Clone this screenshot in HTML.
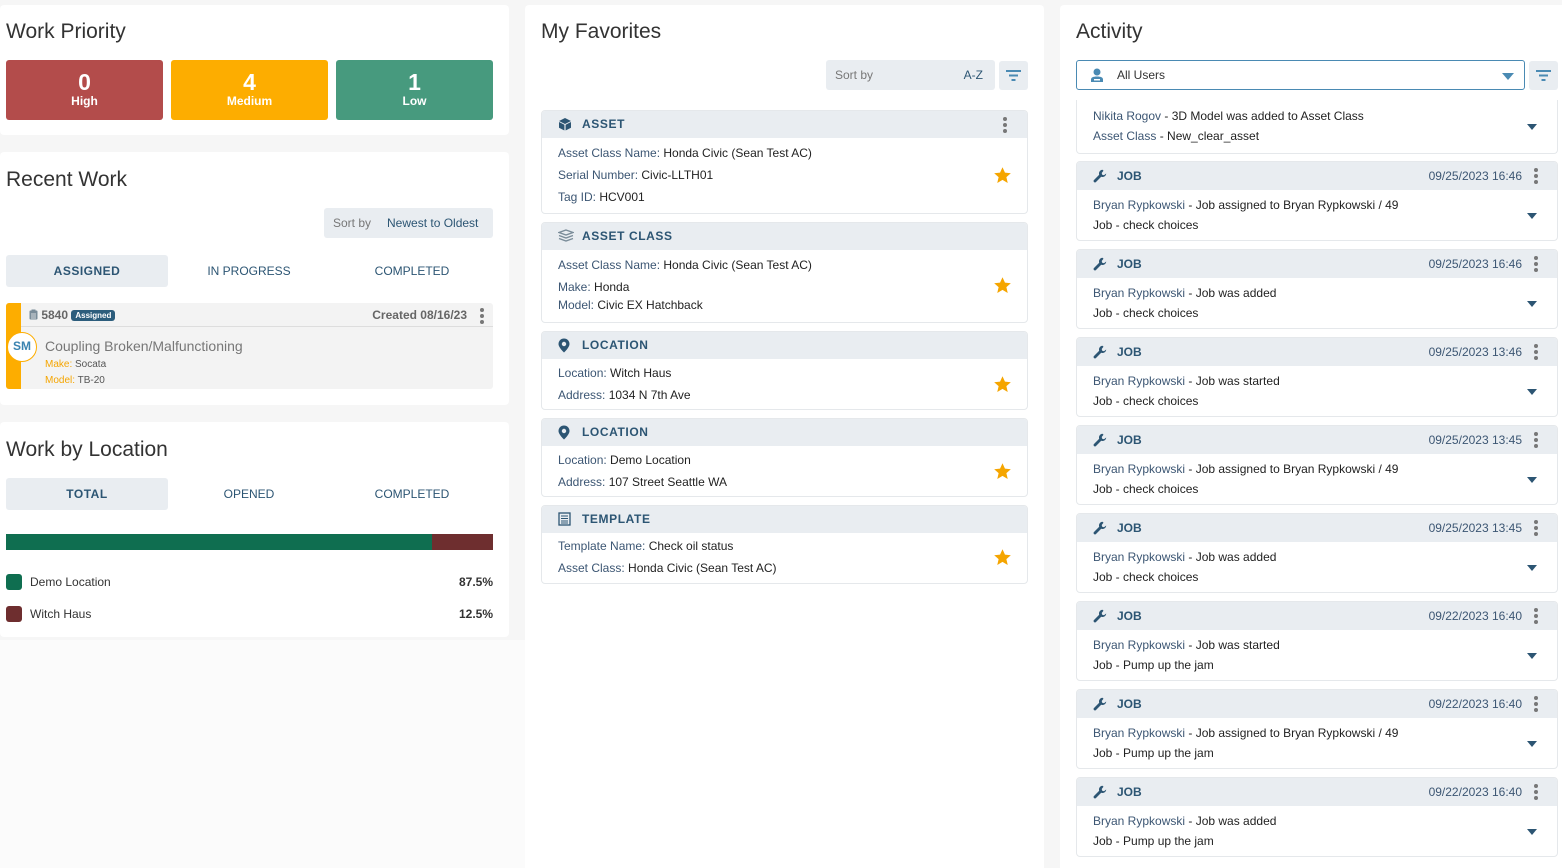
<!DOCTYPE html>
<html style="width:1562px;height:868px;overflow:hidden"><head><meta charset="utf-8"><style>
*{box-sizing:border-box;margin:0;padding:0}
body{width:1562px;height:868px;overflow:hidden;background:#f6f6f6;font-family:"Liberation Sans",Arial,sans-serif;position:relative;color:#333}
.abs{position:absolute}
.panel{position:absolute;background:#fff;border-radius:4px}
h2{position:absolute;font-weight:400;font-size:21px;color:#333}
.pr{position:absolute;top:60px;width:157px;height:60px;border-radius:3px;color:#fff;text-align:center;font-weight:bold}
.pr b{display:block;font-size:23px;margin-top:10px;line-height:24px}
.pr span{display:block;font-size:12px;line-height:14px}
.tab{position:absolute;width:162px;height:32px;line-height:32px;text-align:center;font-size:12px;color:#2c5573;border-radius:3px}
.tab.on{background:#e9edf1;font-weight:bold;letter-spacing:.5px}
.sort{position:absolute;background:#e9edf1;border-radius:3px;font-size:12px;height:30px;line-height:30px}
.mc{position:absolute;left:541px;width:487px;border:1px solid #e5e8eb;border-radius:4px;background:#fff;overflow:hidden}
.mh{height:27px;background:#e9edf1;font-size:12px;font-weight:bold;color:#2c5573;letter-spacing:.6px;line-height:27px;padding-left:40px;position:relative}
.mh svg{position:absolute;left:16px;top:6px}
.mb{padding:4px 16px;font-size:12px;color:#222;position:relative}
.mb p{line-height:22px}
.mb i{font-style:normal;color:#3c5673}
.star{position:absolute;right:15px;width:19px;height:19px}
.ac{position:absolute;left:1076px;width:482px;height:80px;border:1px solid #e5e8eb;border-radius:4px;background:#fff;overflow:hidden}
.ah{height:28px;background:#e9edf1;position:relative;font-size:12px;line-height:28px;color:#2c5573}
.ah .t{position:absolute;left:40px;font-weight:bold}
.ah .d{position:absolute;right:35px;color:#3c5673}
.ah svg{position:absolute;left:16px;top:7px}
.dots{position:absolute;width:4px}
.dots i{display:block;width:4px;height:4px;border-radius:2px;background:#777;margin-bottom:2px}
.ab{padding:5px 16px;font-size:12px;position:relative}
.ab p{line-height:20px;color:#222}
.ab i{font-style:normal;color:#3c5673}
.caret{position:absolute;right:20px;width:0;height:0;border-left:5px solid transparent;border-right:5px solid transparent;border-top:6px solid #2c5573}
</style></head><body>
<div class="abs" style="left:0;top:640px;width:525px;height:228px;background:#fbfbfb"></div>

<div class="panel" style="left:0;top:5px;width:509px;height:130px"></div>
<h2 style="left:6px;top:20px">Work Priority</h2>
<div class="pr" style="left:6px;background:#b34c4b"><b>0</b><span>High</span></div>
<div class="pr" style="left:171px;background:#fdad00"><b>4</b><span>Medium</span></div>
<div class="pr" style="left:336px;background:#479a7e"><b>1</b><span>Low</span></div>

<div class="panel" style="left:0;top:152px;width:509px;height:253px"></div>
<h2 style="left:6px;top:168px">Recent Work</h2>
<div class="sort" style="left:324px;top:208px;width:169px"><span style="color:#777;margin-left:9px">Sort by</span><span style="color:#2c5573;margin-left:16px">Newest to Oldest</span></div>
<div class="tab on" style="left:6px;top:255px">ASSIGNED</div>
<div class="tab" style="left:168px;top:255px">IN PROGRESS</div>
<div class="tab" style="left:331px;top:255px">COMPLETED</div>
<div class="abs" style="left:6px;top:303px;width:487px;height:86px;background:#f3f3f3;border-radius:3px;overflow:hidden">
 <div class="abs" style="left:0;top:0;width:15px;height:86px;background:#fdad00"></div>
 <div class="abs" style="left:15px;top:23px;width:472px;height:1px;background:#ddd"></div>
 <div class="abs" style="left:23px;top:5px;font-size:12px;font-weight:bold;color:#666;line-height:14px">
  <svg width="9" height="11" viewBox="0 0 9 11" style="vertical-align:-1px"><rect x="0.5" y="1.5" width="8" height="9" rx="1" fill="#7a8c99"/><rect x="2.5" y="0.5" width="4" height="2" fill="#7a8c99"/><path d="M2 5h5M2 7h5M2 9h5" stroke="#f3f3f3" stroke-width="0.8"/></svg>
  5840 <span style="background:#2c5d7c;color:#fff;font-size:8px;padding:1px 4px;border-radius:3px;vertical-align:1px">Assigned</span></div>
 <div class="abs" style="right:26px;top:5px;font-size:12px;font-weight:bold;color:#666">Created 08/16/23</div>
 <div class="dots" style="right:9px;top:5px"><i></i><i></i><i></i></div>
 <div class="abs" style="left:1px;top:29px;width:30px;height:30px;border:1.5px solid #fdad00;border-radius:50%;background:#fff;text-align:center;line-height:27px;font-size:12px;font-weight:bold;color:#3a83b0">SM</div>
 <div class="abs" style="left:39px;top:35px;font-size:14px;color:#777">Coupling Broken/Malfunctioning</div>
 <div class="abs" style="left:39px;top:54px;font-size:10px;color:#f5a500;line-height:16px">Make: <span style="color:#555">Socata</span><br>Model: <span style="color:#555">TB-20</span></div>
</div>

<div class="panel" style="left:0;top:422px;width:509px;height:215px"></div>
<h2 style="left:6px;top:438px">Work by Location</h2>
<div class="tab on" style="left:6px;top:478px">TOTAL</div>
<div class="tab" style="left:168px;top:478px">OPENED</div>
<div class="tab" style="left:331px;top:478px">COMPLETED</div>
<div class="abs" style="left:6px;top:534px;width:426px;height:16px;background:#0f6e50"></div>
<div class="abs" style="left:432px;top:534px;width:61px;height:16px;background:#6e2e2f"></div>
<div class="abs" style="left:6px;top:574px;width:16px;height:16px;border-radius:3px;background:#0f6e50"></div>
<div class="abs" style="left:30px;top:575px;font-size:12px;color:#333">Demo Location</div>
<div class="abs" style="right:1069px;top:575px;font-size:12px;font-weight:bold;color:#333">87.5%</div>
<div class="abs" style="left:6px;top:606px;width:16px;height:16px;border-radius:3px;background:#6e2e2f"></div>
<div class="abs" style="left:30px;top:607px;font-size:12px;color:#333">Witch Haus</div>
<div class="abs" style="right:1069px;top:607px;font-size:12px;font-weight:bold;color:#333">12.5%</div>

<div class="panel" style="left:525px;top:5px;width:519px;height:863px;border-radius:4px 4px 0 0"></div>
<h2 style="left:541px;top:20px">My Favorites</h2>
<div class="sort" style="left:826px;top:60px;width:169px"><span style="color:#777;margin-left:9px">Sort by</span><span style="color:#2c5573;position:absolute;right:12px">A-Z</span></div>
<div class="sort" style="left:999px;top:61px;width:29px;height:29px"><svg width="29" height="29" viewBox="0 0 29 29"><path d="M7 10h15M10 14.5h9M12.5 19h4" stroke="#4a8ab3" stroke-width="2"/></svg></div>

<svg width="0" height="0" style="position:absolute"><defs><symbol id="st" viewBox="0 0 24 24"><path d="M12 1.5l3.1 6.9 7.4.7-5.6 5 1.7 7.4L12 17.6l-6.6 3.9 1.7-7.4-5.6-5 7.4-.7Z" fill="#f5a500"/></symbol></defs></svg>

<div class="mc" style="top:110px;height:104px">
 <div class="mh"><svg width="14" height="14" viewBox="0 0 14 14"><path d="M7 1L13 4L7 7L1 4Z M1 5L6.4 7.8V13.5L1 10.7Z M13 5L7.6 7.8V13.5L13 10.7Z" fill="#2c5573"/></svg>ASSET<div class="dots" style="right:20px;top:6px"><i></i><i></i><i></i></div></div>
 <div class="mb"><p><i>Asset Class Name:</i> Honda Civic (Sean Test AC)</p><p><i>Serial Number:</i> Civic-LLTH01</p><p><i>Tag ID:</i> HCV001</p><svg class="star" style="top:28px"><use href="#st"/></svg></div>
</div>
<div class="mc" style="top:222px;height:101px">
 <div class="mh"><svg width="16" height="14" viewBox="0 0 16 14"><path d="M8 1L15 3.5L8 6L1 3.5Z M1 6.5L8 9L15 6.5 M1 9.5L8 12L15 9.5" fill="none" stroke="#7a8c99" stroke-width="1.3"/></svg>ASSET CLASS</div>
 <div class="mb" style="padding-top:3px"><p style="line-height:24px"><i>Asset Class Name:</i> Honda Civic (Sean Test AC)</p><p style="line-height:18px;margin-top:1px"><i>Make:</i> Honda</p><p style="line-height:18px"><i>Model:</i> Civic EX Hatchback</p><svg class="star" style="top:26px"><use href="#st"/></svg></div>
</div>
<div class="mc" style="top:331px;height:79px">
 <div class="mh"><svg width="12" height="15" viewBox="0 0 12 15"><path d="M6 0.5C2.9 0.5 0.5 2.9 0.5 6C0.5 9.5 6 14.5 6 14.5S11.5 9.5 11.5 6C11.5 2.9 9.1 0.5 6 0.5Z" fill="#2c5573"/><circle cx="6" cy="6" r="2.2" fill="#e9edf1"/></svg>LOCATION</div>
 <div class="mb" style="padding-top:3px"><p><i>Location:</i> Witch Haus</p><p><i>Address:</i> 1034 N 7th Ave</p><svg class="star" style="top:16px"><use href="#st"/></svg></div>
</div>
<div class="mc" style="top:418px;height:79px">
 <div class="mh"><svg width="12" height="15" viewBox="0 0 12 15"><path d="M6 0.5C2.9 0.5 0.5 2.9 0.5 6C0.5 9.5 6 14.5 6 14.5S11.5 9.5 11.5 6C11.5 2.9 9.1 0.5 6 0.5Z" fill="#2c5573"/><circle cx="6" cy="6" r="2.2" fill="#e9edf1"/></svg>LOCATION</div>
 <div class="mb" style="padding-top:3px"><p><i>Location:</i> Demo Location</p><p><i>Address:</i> 107 Street Seattle WA</p><svg class="star" style="top:16px"><use href="#st"/></svg></div>
</div>
<div class="mc" style="top:505px;height:79px">
 <div class="mh"><svg width="13" height="14" viewBox="0 0 13 14"><rect x="1" y="1" width="11" height="12" fill="none" stroke="#2c5573" stroke-width="1.3"/><path d="M3 4h7M3 6.5h7M3 9h7M3 11h7" stroke="#2c5573" stroke-width="1"/></svg>TEMPLATE</div>
 <div class="mb" style="padding-top:2px"><p><i>Template Name:</i> Check oil status</p><p><i>Asset Class:</i> Honda Civic (Sean Test AC)</p><svg class="star" style="top:15px"><use href="#st"/></svg></div>
</div>

<div class="panel" style="left:1060px;top:5px;width:502px;height:863px;border-radius:4px 0 0 0"></div>
<h2 style="left:1076px;top:20px">Activity</h2>
<div class="abs" style="left:1076px;top:60px;width:449px;height:30px;border:1px solid #4a8ab3;border-radius:3px">
 <svg class="abs" style="left:13px;top:6px" width="14" height="16" viewBox="0 0 14 16"><circle cx="7" cy="5" r="3.5" fill="#4a8ab3"/><path d="M1 15V12.5C1 10.5 3 9.5 7 9.5S13 10.5 13 12.5V15Z" fill="#4a8ab3"/><rect x="4" y="12" width="6" height="1.5" fill="#fff"/></svg>
 <span class="abs" style="left:40px;top:7px;font-size:12px;color:#333">All Users</span>
 <div class="abs" style="right:10px;top:12px;border-left:6px solid transparent;border-right:6px solid transparent;border-top:7px solid #4a8ab3"></div>
</div>
<div class="sort" style="left:1529px;top:61px;width:29px;height:29px"><svg width="29" height="29" viewBox="0 0 29 29"><path d="M7 10h15M10 14.5h9M12.5 19h4" stroke="#4a8ab3" stroke-width="2"/></svg></div>

<div class="ac" style="top:100px;height:54px;border-top:none;border-radius:0 0 4px 4px">
 <div class="ab" style="padding-top:6px"><p><i>Nikita Rogov</i> - 3D Model was added to Asset Class</p><p><i>Asset Class</i> - New_clear_asset</p><div class="caret" style="top:24px"></div></div>
</div>

<div id="acts"></div>
<script>
var d=[["09/25/2023 16:46","Job assigned to Bryan Rypkowski / 49","check choices"],
["09/25/2023 16:46","Job was added","check choices"],
["09/25/2023 13:46","Job was started","check choices"],
["09/25/2023 13:45","Job assigned to Bryan Rypkowski / 49","check choices"],
["09/25/2023 13:45","Job was added","check choices"],
["09/22/2023 16:40","Job was started","Pump up the jam"],
["09/22/2023 16:40","Job assigned to Bryan Rypkowski / 49","Pump up the jam"],
["09/22/2023 16:40","Job was added","Pump up the jam"]];
var h="";
d.forEach(function(r,k){
h+='<div class="ac" style="top:'+(161+88*k)+'px"><div class="ah"><svg width="14" height="14" viewBox="0 0 14 14"><path d="M9.5 0.8A3.7 3.7 0 0 0 6.2 5.8L1 11a1.4 1.4 0 0 0 2 2l5.2-5.2A3.7 3.7 0 0 0 13.2 4.5L11 6.3 9.2 5.8 8.7 4 10.5 1.8A3.7 3.7 0 0 0 9.5 0.8Z" fill="#2c5573"/></svg><span class="t">JOB</span><span class="d">'+r[0]+'</span><div class="dots" style="right:19px;top:6px"><i></i><i></i><i></i></div></div><div class="ab"><p><i>Bryan Rypkowski</i> - '+r[1]+'</p><p>Job - '+r[2]+'</p><div class="caret" style="top:23px"></div></div></div>';
});
document.getElementById("acts").innerHTML=h;
</script>
</body></html>
